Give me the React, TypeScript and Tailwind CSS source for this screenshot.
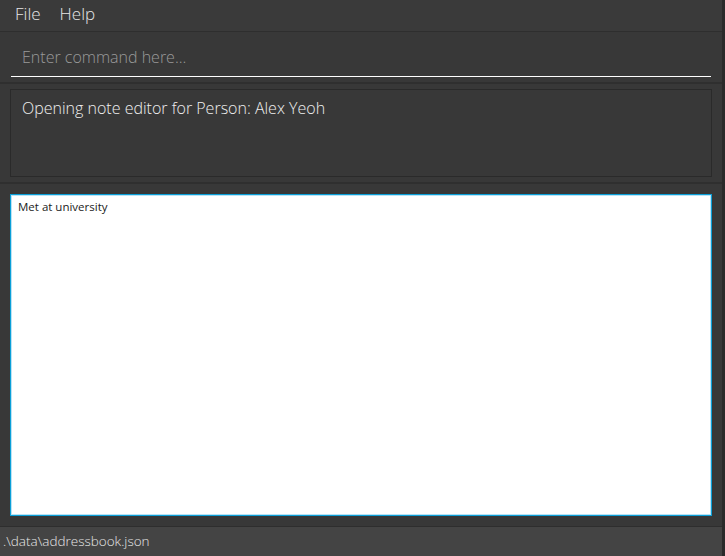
export default function App() {
    const font = { fontFamily: '"Segoe UI", "Open Sans", "Noto Sans", sans-serif' };

    return (
        <div className="flex h-[556px] w-[725px] bg-[#383838]" style={font}>
            <div className="flex flex-1 flex-col">
                {/* menu bar */}
                <div className="flex h-[32px] gap-[19px] border-b border-[#2e2e2e] bg-[#3a3a3a] pl-[15px] text-[17px] font-light leading-[27px] text-[#e6e6e6]">
                    <span>File</span>
                    <span>Help</span>
                </div>

                {/* command box */}
                <div className="h-[52px] border-b-2 border-[#2f2f2f] pl-[11px] pr-[11px] pt-[11px]">
                    <div className="h-[34px] border-b border-white pl-[11px] text-[16px] font-light leading-[28px] text-[#9a9a9a]">
                        Enter command here...
                    </div>
                </div>

                {/* result display */}
                <div className="h-[100px] border-b-2 border-[#2f2f2f] px-[10px] pt-[5px]">
                    <div className="h-[88px] border border-[#2a2a2a] px-[11px] pt-[6px] text-[16px] font-light text-[#f0f0f0]">
                        Opening note editor for Person: Alex Yeoh
                    </div>
                </div>

                {/* note editor */}
                <div className="flex-1 px-[10px] pb-[10px] pt-[10px]">
                    <div className="h-full border border-[#0a9fd8] bg-white px-[7px] pt-[5px] text-[11.5px] leading-[14px] text-[#222] shadow-[inset_0_0_0_1px_#b9e3f5]">
                        Met at university
                    </div>
                </div>

                {/* status bar */}
                <div className="flex h-[30px] items-center border-t border-[#2e2e2e] bg-[#444444] pl-[3px] text-[13.5px] font-light text-[#e8e8e8]">
                    .\data\addressbook.json
                </div>
            </div>
            <div className="w-[3px] bg-[#2a2a2a]" />
        </div>
    );
}
